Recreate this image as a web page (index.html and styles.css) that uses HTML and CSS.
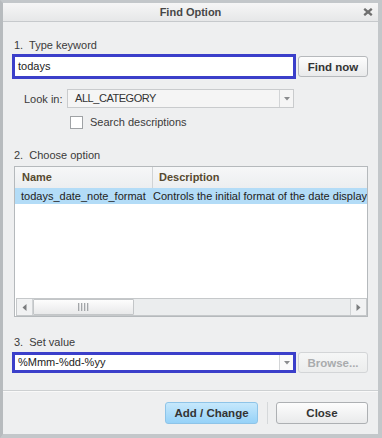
FILE: index.html
```html
<!DOCTYPE html>
<html>
<head>
<meta charset="utf-8">
<title>Find Option</title>
<link rel="stylesheet" href="styles.css">
</head>
<body>
<div class="window">
  <div class="titlebar">
    <span class="title">Find Option</span>
    <svg class="close" width="10" height="8" viewBox="0 0 10 8"><path d="M1.2 0.8 L8.8 7.2 M8.8 0.8 L1.2 7.2" stroke="#6f6f6f" stroke-width="2.3" fill="none"/></svg>
  </div>
  <div class="content">
    <div class="label">1.  Type keyword</div>
    <div class="search-row">
      <div class="input focus">todays</div>
      <button class="btn find">Find now</button>
    </div>
    <div class="look-row">
      <span class="look-label">Look in:</span>
      <div class="combo">
        <span class="combo-text caps">ALL_CATEGORY</span>
        <span class="combo-arrow"><svg width="6" height="4" viewBox="0 0 6 4"><path d="M0 0 L6 0 L3 3.5 Z" fill="#8a8c8e"/></svg></span>
      </div>
    </div>
    <div class="check-row">
      <span class="checkbox"></span>
      <span class="check-text">Search descriptions</span>
    </div>
    <div class="label label2">2.  Choose option</div>
    <div class="table">
      <div class="thead">
        <div class="th c1">Name</div>
        <div class="th c2">Description</div>
      </div>
      <div class="tr selected">
        <div class="td c1">todays_date_note_format</div>
        <div class="td c2">Controls the initial format of the date displayed in notes</div>
      </div>
      <div class="spacer"></div>
      <div class="hscroll">
        <div class="sb-btn left"><svg width="5" height="7" viewBox="0 0 5 7"><path d="M4.5 0 L4.5 7 L0.5 3.5 Z" fill="#7a7c7e"/></svg></div>
        <div class="thumb"><svg width="11" height="8" viewBox="0 0 11 8"><rect x="0" y="0" width="1.3" height="8" fill="#a3a6a9"/><rect x="3" y="0" width="1.3" height="8" fill="#a3a6a9"/><rect x="6" y="0" width="1.3" height="8" fill="#a3a6a9"/><rect x="9" y="0" width="1.3" height="8" fill="#a3a6a9"/></svg></div>
        <div class="track"></div>
        <div class="sb-btn right"><svg width="5" height="7" viewBox="0 0 5 7"><path d="M0.5 0 L0.5 7 L4.5 3.5 Z" fill="#7a7c7e"/></svg></div>
      </div>
    </div>
    <div class="label label3">3.  Set value</div>
    <div class="value-row">
      <div class="vcombo focus">
        <span class="vcombo-text">%Mmm-%dd-%yy</span>
        <span class="combo-arrow"><svg width="6" height="4" viewBox="0 0 6 4"><path d="M0 0 L6 0 L3 3.5 Z" fill="#8a8c8e"/></svg></span>
      </div>
      <button class="btn browse" disabled>Browse...</button>
    </div>
  </div>
  <div class="footer">
    <button class="btn add">Add / Change</button>
    <span class="fdivider"></span>
    <button class="btn closebtn">Close</button>
  </div>
</div>
</body>
</html>
```

FILE: styles.css
```css
* { box-sizing: border-box; }
html, body { margin: 0; padding: 0; }
body {
  width: 382px;
  height: 438px;
  overflow: hidden;
  font-family: "Liberation Sans", Arial, sans-serif;
  font-size: 11px;
  color: #353535;
  background: #c2c6c9;
}
.window {
  width: 382px;
  height: 438px;
  border-style: solid;
  border-color: #c3c7ca;
  border-left-color: #b7bbbe;
  border-width: 3px 4px 4px 3px;
  background: #eeeff0;
  display: flex;
  flex-direction: column;
}
.titlebar {
  height: 19px;
  flex: none;
  border-bottom: 1px solid #c6c9cc;
  background: linear-gradient(#f6f6f6, #e6e7e8);
  display: grid;
  grid-template-columns: 1fr auto 1fr;
  align-items: center;
}
.title {
  grid-column: 2;
  font-weight: bold;
  color: #474747;
  line-height: 18px;
}
.close {
  grid-column: 3;
  justify-self: end;
  margin-right: 5px;
  display: block;
}
.content {
  flex: 1;
  padding: 16px 0 0 9px;
  display: flex;
  flex-direction: column;
  align-items: flex-start;
}
.label {
  line-height: 14px;
  padding-left: 2px;
  color: #3a3a3a;
  white-space: pre;
}
.search-row {
  margin-top: 2px;
  display: flex;
  align-items: center;
  height: 25px;
}
.input {
  width: 284px;
  height: 25px;
  background: #fff;
  padding-left: 3px;
  line-height: 19px;
  color: #222;
}
.focus { border: 3px solid #3b3fca; }
.btn {
  font-family: "Liberation Sans", Arial, sans-serif;
  font-size: 11.5px;
  font-weight: bold;
  color: #333;
  padding: 0;
  border: 1px solid #b6b9bc;
  border-radius: 3px;
  background: linear-gradient(#fdfdfd, #e9eaeb);
  text-align: center;
}
.find {
  margin-left: 2px;
  width: 70px;
  height: 21px;
}
.look-row {
  margin-top: 10px;
  padding-left: 12px;
  display: flex;
  align-items: center;
}
.look-label { width: 43px; color: #3a3a3a; }
.combo {
  width: 227px;
  height: 19px;
  border: 1px solid #c9cbcd;
  background: #f5f5f5;
  display: flex;
}
.combo-text {
  flex: 1;
  padding-left: 7px;
  line-height: 17px;
  color: #333;
}
.caps { letter-spacing: -0.45px; }
.combo-arrow {
  width: 14px;
  border-left: 1px solid #d2d4d6;
  display: flex;
  align-items: center;
  justify-content: center;
}
.check-row {
  margin-top: 8px;
  padding-left: 58px;
  display: flex;
  align-items: center;
  height: 13px;
}
.checkbox {
  width: 13px;
  height: 13px;
  border: 1px solid #9fa2a5;
  background: #fff;
  margin-right: 7px;
}
.check-text { color: #3a3a3a; line-height: 13px; }
.label2 { margin-top: 19px; }
.table {
  margin-top: 4px;
  margin-left: 2px;
  width: 354px;
  height: 151px;
  border: 1px solid #b5b9bc;
  background: #fff;
  display: flex;
  flex-direction: column;
  overflow: hidden;
}
.thead {
  height: 21px;
  flex: none;
  display: grid;
  grid-template-columns: 138px 1fr;
  background: linear-gradient(#f6f7f8, #eceef0);
}
.th {
  font-weight: bold;
  color: #56492f;
  line-height: 21px;
  white-space: nowrap;
}
.thead .c1 { padding-left: 7px; border-right: 1px solid #d0d3d5; }
.thead .c2 { padding-left: 6px; }
.tr {
  height: 16px;
  flex: none;
  display: grid;
  grid-template-columns: 138px 1fr;
  line-height: 16px;
}
.selected { background: #b3dcf7; }
.td { white-space: nowrap; overflow: hidden; color: #222; }
.tr .c1 { padding-left: 6px; }
.tr .c2 { padding-left: 0; }
.spacer { flex: 1; }
.hscroll {
  flex: none;
  height: 18px;
  margin-left: 1px;
  border: 1px solid #c5c8ca;
  background: #ebedee;
  display: flex;
}
.sb-btn {
  width: 16px;
  display: flex;
  align-items: center;
  justify-content: center;
  background: #f1f2f3;
}
.sb-btn.left { border-right: 1px solid #d0d3d5; }
.sb-btn.right { border-left: 1px solid #d0d3d5; }
.thumb {
  width: 101px;
  border: 1px solid #c3c6c8;
  border-radius: 1px;
  background: linear-gradient(#fdfdfd, #e8e9ea);
  display: flex;
  align-items: center;
  justify-content: center;
}
.track { flex: 1; }
.label3 { margin-top: 18px; }
.value-row {
  margin-top: 3px;
  display: flex;
  align-items: center;
}
.vcombo {
  width: 284px;
  height: 21px;
  background: #fff;
  display: flex;
}
.vcombo-text {
  flex: 1;
  padding-left: 3px;
  line-height: 15px;
  color: #222;
}
.vcombo .combo-arrow { border-left-color: #d3d5d7; background: #fafafa; }
.browse {
  margin-left: 2px;
  width: 70px;
  height: 21px;
  color: #a9abad;
  border-color: #d3d5d7;
  background: linear-gradient(#f5f6f6, #eceded);
}
.footer {
  height: 44px;
  flex: none;
  border-top: 1px solid #cdd0d2;
  box-shadow: inset 0 1px 0 #f9f9f9;
  padding: 11px 10px 10px 0;
  display: flex;
  justify-content: flex-end;
  align-items: flex-start;
}
.add {
  width: 93px;
  height: 22px;
  border-color: #8ec4e8;
  background: linear-gradient(#c6e8fc, #96d2f8);
}
.fdivider {
  width: 1px;
  height: 22px;
  background: #d5d8da;
  margin: 0 8px 0 9px;
}
.closebtn {
  width: 92px;
  height: 22px;
  border-color: #adb0b3;
}
```
